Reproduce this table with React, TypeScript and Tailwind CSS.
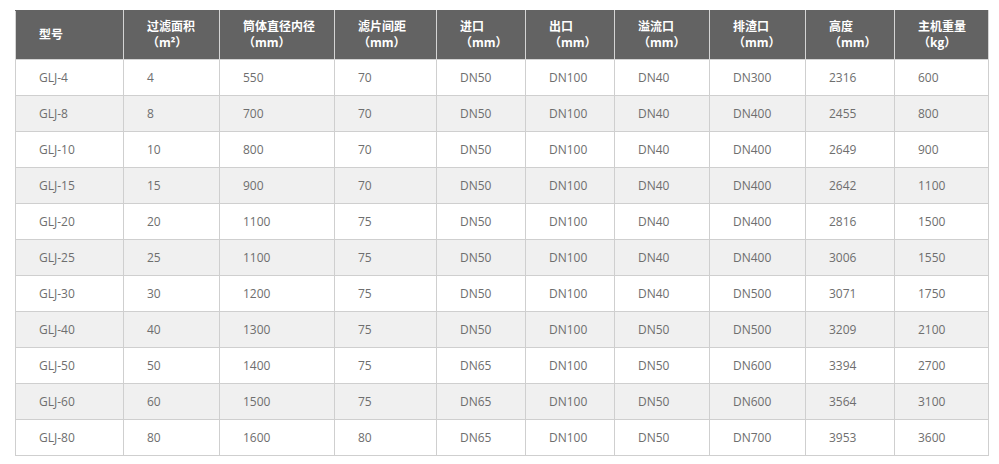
import React from "react";

const headers: [string, string | null][] = [
  ["型号", null],
  ["过滤面积", "（m²）"],
  ["筒体直径内径", "（mm）"],
  ["滤片间距", "（mm）"],
  ["进口", "（mm）"],
  ["出口", "（mm）"],
  ["溢流口", "（mm）"],
  ["排渣口", "（mm）"],
  ["高度", "（mm）"],
  ["主机重量", "（kg）"],
];

const widths = [108, 96, 115, 102, 89, 89, 95, 96, 89, 94];

const rows: string[][] = [
  ["GLJ-4", "4", "550", "70", "DN50", "DN100", "DN40", "DN300", "2316", "600"],
  ["GLJ-8", "8", "700", "70", "DN50", "DN100", "DN40", "DN400", "2455", "800"],
  ["GLJ-10", "10", "800", "70", "DN50", "DN100", "DN40", "DN400", "2649", "900"],
  ["GLJ-15", "15", "900", "70", "DN50", "DN100", "DN40", "DN400", "2642", "1100"],
  ["GLJ-20", "20", "1100", "75", "DN50", "DN100", "DN40", "DN400", "2816", "1500"],
  ["GLJ-25", "25", "1100", "75", "DN50", "DN100", "DN40", "DN400", "3006", "1550"],
  ["GLJ-30", "30", "1200", "75", "DN50", "DN100", "DN40", "DN500", "3071", "1750"],
  ["GLJ-40", "40", "1300", "75", "DN50", "DN100", "DN50", "DN500", "3209", "2100"],
  ["GLJ-50", "50", "1400", "75", "DN65", "DN100", "DN50", "DN600", "3394", "2700"],
  ["GLJ-60", "60", "1500", "75", "DN65", "DN100", "DN50", "DN600", "3564", "3100"],
  ["GLJ-80", "80", "1600", "80", "DN65", "DN100", "DN50", "DN700", "3953", "3600"],
];

export default function App() {
  return (
    <div
      className="w-[999px] h-[464px] bg-white pt-[10px] pl-[15px]"
      style={{ fontFamily: '"Open Sans", "Noto Sans CJK SC", sans-serif' }}
    >
      <table className="border-collapse table-fixed w-[973px] text-[12px]">
        <colgroup>
          {widths.map((w, i) => (
            <col key={i} style={{ width: w }} />
          ))}
        </colgroup>
        <thead>
          <tr className="bg-[#636363] h-[49px]">
            {headers.map(([a, b], i) => (
              <th
                key={i}
                className="border border-[#d4d4d4] border-t-[#636363] text-left align-middle pl-[23px] font-bold text-white leading-[16px]"
              >
                <div>{a}</div>
                {b && <div>{b}</div>}
              </th>
            ))}
          </tr>
        </thead>
        <tbody>
          {rows.map((r, ri) => (
            <tr key={ri} className={ri % 2 === 1 ? "bg-[#f0f0f0] h-[36px]" : "bg-white h-[36px]"}>
              {r.map((c, ci) => (
                <td
                  key={ci}
                  className="border border-[#cfcfcf] pl-[23px] text-[#6e6e6e] align-middle leading-none"
                >
                  {c}
                </td>
              ))}
            </tr>
          ))}
        </tbody>
      </table>
    </div>
  );
}
